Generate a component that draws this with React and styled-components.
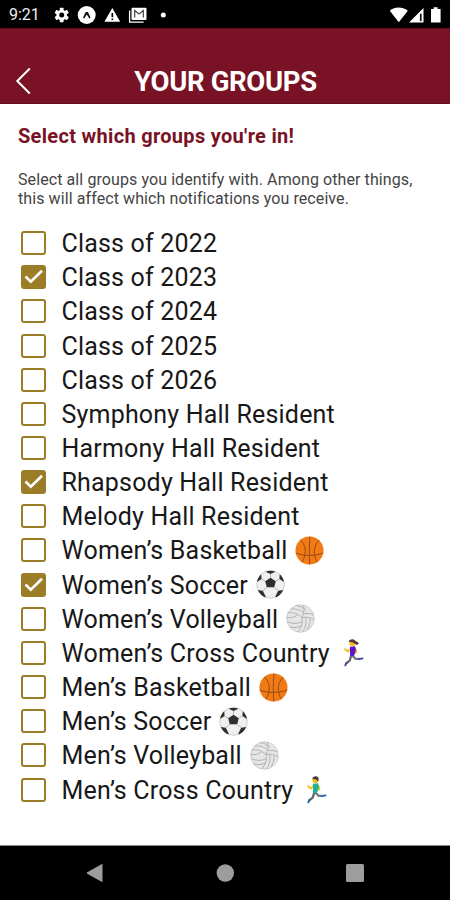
import React, { useState } from "react";
import styled, { createGlobalStyle } from "styled-components";

const GROUPS = [
  { name: "Class of 2022" },
  { name: "Class of 2023", joined: true },
  { name: "Class of 2024" },
  { name: "Class of 2025" },
  { name: "Class of 2026" },
  { name: "Symphony Hall Resident" },
  { name: "Harmony Hall Resident" },
  { name: "Rhapsody Hall Resident", joined: true },
  { name: "Melody Hall Resident" },
  { name: "Women’s Basketball", icon: "basketball" },
  { name: "Women’s Soccer", icon: "soccer", joined: true },
  { name: "Women’s Volleyball", icon: "volleyball" },
  { name: "Women’s Cross Country", icon: "womanRunning" },
  { name: "Men’s Basketball", icon: "basketball" },
  { name: "Men’s Soccer", icon: "soccer" },
  { name: "Men’s Volleyball", icon: "volleyball" },
  { name: "Men’s Cross Country", icon: "manRunning" },
];

const Basketball = () => (
  <svg width="29" height="29" viewBox="0 0 29 29" fill="none">
    <circle cx="14.5" cy="14.5" r="14" fill="#f27a12" />
    <g stroke="#9a4a1c" strokeWidth="1">
      <path d="M15 .6C14.200 9 14.200 20 14.700 28.400" />
      <path d="M.8 17C9 20.300 20 20.300 28.200 17" />
      <path d="M5.500 3.800c5.500 6 6.500 14 1.500 22.500" />
      <path d="M24 4.300c-5.500 5.700-6.500 14-1.700 22" />
    </g>
  </svg>
);

const Soccer = () => (
  <svg width="29" height="29" viewBox="0 0 29 29">
    <circle cx="14.5" cy="14.5" r="13.8" fill="#f0f0ee" stroke="#b5b5b3" strokeWidth=".6" />
    <g fill="#2f2f30">
      <path d="M14.500 7.800l5.300 3.500-1.600 5.900h-7.400l-1.600-5.900z" />
      <path d="M9.500 1.700c3-1.300 7-1.300 10 0l-5 2.300z" />
      <path d="M1 12C1.600 9 3 6.200 5.300 4.300l.3 4.700z" />
      <path d="M28 12c-.6-3-2-5.800-4.300-7.700l-.3 4.700z" />
      <path d="M1.800 20l5 .8 3 5.900-1 .500C5.600 25.700 3.300 23.400 1.800 20z" />
      <path d="M27.200 20l-5 .8-3 5.900 1 .500c3.200-1.500 5.500-3.800 7-7.200z" />
    </g>
    <g stroke="#a3a3a1" strokeWidth=".8" fill="none">
      <path d="M14.500 4v3.800M9.200 11.300L5.600 9M19.800 11.300L23.400 9M10.800 17.200l-4 3.600M18.200 17.200l4 3.600" />
    </g>
  </svg>
);

const Volleyball = () => (
  <svg width="29" height="29" viewBox="0 0 29 29" fill="none">
    <circle cx="14.500" cy="14.500" r="13.800" fill="#e6e6e7" stroke="#c6c8c9" strokeWidth=".8" />
    <g stroke="#a9adaf" strokeWidth=".9">
      <path d="M16 13.500C12 9.500 7 8 1.800 9" />
      <path d="M18.500 9.700C14.500 6 10 4.500 5 5" />
      <path d="M20 6.300C17 3.500 13.500 2 10 1.500" />
      <path d="M16 13.500c2-4 2.500-8.500 1.500-12.500" />
      <path d="M16 13.500c4.500-.8 9 0 12.300 2.500" />
      <path d="M18.500 9.700c3.500-.7 6.500-.2 9 1.300" />
      <path d="M16 13.500c1 5-.5 10.500-4.500 14.500" />
      <path d="M19.700 13.500c1 5-.2 10-3.200 14.500" />
      <path d="M23.800 14.200c.7 4-.3 8-2.800 11.500" />
      <path d="M16.500 17.500C11.500 20 6 20 1.300 17.500" />
      <path d="M11.500 11c-3.500 2.500-7 3.200-10.800 2.500" />
      <path d="M15 22C11 24 7 24 3 22.500" />
    </g>
  </svg>
);

const Runner = ({ shirt, shoes, longHair }) => (
  <svg width="29" height="29" viewBox="0 0 29 29" fill="none" strokeLinecap="round" strokeLinejoin="round">
    <path d="M13.800 17l3.700 3.800h3.500" stroke="#75787c" strokeWidth="2.300" />
    <path d="M13.200 17.500l-1.500 5.200-3 2.300" stroke="#65686d" strokeWidth="2.300" />
    <path d="M21.200 21.200l3.300-.8M8.300 25l-1 2.300" stroke={shoes} strokeWidth="1.900" />
    <path d="M12.500 10.500l-2.500 3-3-2.200" stroke="#f8bd22" strokeWidth="1.800" />
    <path d="M17.300 10.500l1.200 3.800-2.500.5" stroke="#f8bd22" strokeWidth="1.800" />
    <path d="M12 8.800l5-.5 1 3.700-2 6-4-.3z" fill={shirt} />
    <circle cx="14.300" cy="5.300" r="2.900" fill="#f8bd22" />
    {longHair ? (
      <path d="M10.500 3.500c1.700-3 5.500-2.700 7-.4 1.500.9 2.500.7 3.300 2.700-1.700 1.500-3.300.8-4.600-.5-1.500-1.400-3.700-.8-5.700-1.800z" fill="#593734" />
    ) : (
      <path d="M11.300 3.900c.2-3 5.200-3.500 6.300-.7.400 1.600-.2 2.800-1.100 3.300l-1-2z" fill="#493b37" />
    )}
  </svg>
);

const ICONS = {
  basketball: <Basketball />,
  soccer: <Soccer />,
  volleyball: <Volleyball />,
  womanRunning: <Runner shirt="#5b16cf" shoes="#3648b5" longHair />,
  manRunning: <Runner shirt="#18b59b" shoes="#1b69b4" />,
};

const GroupRow = ({ group }) => {
  const [checked, setChecked] = useState(!!group.joined);

  return (
    <Row>
      <HiddenInput type="checkbox" checked={checked} onChange={() => setChecked(!checked)} />
      <Box $checked={checked}>
        {checked && (
          <svg width="20" height="20" viewBox="0 0 20 20" fill="none">
            <path d="M1.500 9.500l5.300 5.200L18 3.800" stroke="#fff" strokeWidth="2.700" />
          </svg>
        )}
      </Box>
      <Label>{group.name}</Label>
      {ICONS[group.icon]}
    </Row>
  );
};

const StatusIcons = () => (
  <svg width="120" height="20" viewBox="0 0 120 20">
    <g transform="translate(7.700 10)">
      <g fill="#fff">
        <circle r="5.300" />
        {[0, 60, 120].map((angle) => (
          <rect key={angle} x="-1.900" y="-7.200" width="3.800" height="14.400" rx=".6" transform={`rotate(${angle})`} />
        ))}
      </g>
      <circle r="2.500" fill="#000" />
    </g>
    <circle cx="32.700" cy="10" r="9" fill="#fff" />
    <path d="M29 12.800l2.700-5.800h2.200l2.700 5.800-1.300.7-2.500-4-2.500 4z" fill="#111" />
    <path d="M58.300 3l7.900 13.700H50.400z" fill="#fff" />
    <path d="M57.500 8h1.700v4.300h-1.700zM57.500 13.500h1.700v1.600h-1.700z" fill="#000" />
    <path d="M75.600 5.500v11.700h14" stroke="#fff" strokeWidth="1.300" fill="none" />
    <rect x="77.500" y="2.700" width="15" height="12.300" rx="1" fill="#fff" />
    <path d="M80.700 12.500V5.500l4.300 3.600 4.300-3.600v7" stroke="#333" strokeWidth="1.100" fill="none" />
    <circle cx="109.300" cy="10" r="2.500" fill="#fff" />
  </svg>
);

const SignalIcons = () => (
  <svg width="54" height="20" viewBox="0 0 54 20" fill="#fff">
    <path d="M.8 5.700C6 1.300 13 1.300 18.800 5.700L9.800 17.200z" />
    <path d="M20 17.500L34.500 3v14.500z" />
    <path d="M30.900 8.800h1.700v7.300h-1.700z" fill="#111" />
    <path d="M42 4h2.600V2.200h4V4h3v13.500H42z" />
  </svg>
);

const App = () => (
  <Screen>
    <GlobalStyle />
    <StatusBar>
      <Clock>9:21</Clock>
      <StatusIcons />
      <Spacer />
      <SignalIcons />
    </StatusBar>
    <Header>
      <BackButton aria-label="Back">
        <svg width="18" height="28" viewBox="0 0 18 28" fill="none">
          <path d="M14.800 1.500L2.300 14l12.500 12.500" stroke="#fff" strokeWidth="2" />
        </svg>
      </BackButton>
      <Title>YOUR GROUPS</Title>
    </Header>
    <Content>
      <Heading>Select which groups you're in!</Heading>
      <Intro>
        <IntroLine>Select all groups you identify with. Among other things,</IntroLine>
        <IntroLine>this will affect which notifications you receive.</IntroLine>
      </Intro>
      {GROUPS.map((group) => (
        <GroupRow key={group.name} group={group} />
      ))}
    </Content>
    <NavBar>
      <svg width="18" height="20" viewBox="0 0 18 20">
        <path d="M1.200 9.300L16.500 .8v18.400L1.200 10.700q-1-.7 0-1.400z" fill="#9d9d9d" />
      </svg>
      <svg width="18" height="20" viewBox="0 0 18 20">
        <circle cx="9.300" cy="10" r="8.700" fill="#9d9d9d" />
      </svg>
      <svg width="18" height="20" viewBox="0 0 18 20">
        <rect y="1" width="18" height="18" rx="1.500" fill="#9d9d9d" />
      </svg>
    </NavBar>
  </Screen>
);

export default App;

const GlobalStyle = createGlobalStyle`
  body {
    margin: 0;
    background: #fff;
    font-family: Roboto, sans-serif;
  }

  * {
    box-sizing: border-box;
  }
`;

const Screen = styled.div`
  display: flex;
  flex-direction: column;
  width: 450px;
  height: 900px;
  overflow: hidden;
  background: #fff;
`;

const StatusBar = styled.div`
  display: flex;
  align-items: center;
  flex: 0 0 28px;
  padding: 1px 7px 0 9px;
  background: #000;
`;

const Clock = styled.span`
  width: 45px;
  color: #eee;
  font-size: 16px;
  line-height: 20px;
`;

const Spacer = styled.div`
  flex: 1;
`;

const Header = styled.header`
  display: grid;
  grid-template-columns: 40px 1fr 40px;
  align-items: center;
  flex: 0 0 76px;
  padding: 30px 5px 0 6px;
  border-top: 1px solid #650c1f;
  border-bottom: 1px solid #650c1f;
  background: #7a1226;
`;

const BackButton = styled.button`
  display: flex;
  width: 36px;
  padding: 0 9px;
  border: 0;
  background: none;
`;

const Title = styled.h1`
  margin: 0;
  padding-top: 2px;
  color: #fff;
  font-size: 27.5px;
  font-weight: 700;
  line-height: 32px;
  letter-spacing: -0.35px;
  text-align: center;
  white-space: nowrap;
`;

const Content = styled.main`
  flex: 1;
  padding: 20px 18px 0;
`;

const Heading = styled.h2`
  margin: 0;
  color: #7a1226;
  font-size: 20px;
  font-weight: 700;
  line-height: 24px;
  letter-spacing: 0.31px;
  white-space: nowrap;
`;

const Intro = styled.p`
  margin: 22px 0 18px;
  color: #444;
  font-size: 16px;
  line-height: 19px;
  letter-spacing: 0.09px;
`;

const IntroLine = styled.span`
  display: block;
  white-space: nowrap;
`;

const Row = styled.label`
  display: flex;
  align-items: center;
  height: 34.16px;
  padding-left: 3px;
`;

const HiddenInput = styled.input`
  position: absolute;
  opacity: 0;
  pointer-events: none;
`;

const Box = styled.span`
  display: flex;
  align-items: center;
  justify-content: center;
  flex: none;
  width: 25px;
  height: 24px;
  margin-right: 15.5px;
  border: 2px solid #9a7d26;
  border-radius: 3px;
  background: ${(props) => (props.$checked ? "#9a7d26" : "#fff")};
`;

const Label = styled.span`
  padding-top: 2px;
  margin-right: 8px;
  color: #181818;
  font-size: 25px;
  line-height: 34px;
  letter-spacing: 0.19px;
  white-space: nowrap;
`;

const NavBar = styled.nav`
  display: flex;
  align-items: center;
  justify-content: space-between;
  flex: 0 0 55px;
  padding: 0 86px;
  border-top: 1px solid #888;
  background: #000;
`;
